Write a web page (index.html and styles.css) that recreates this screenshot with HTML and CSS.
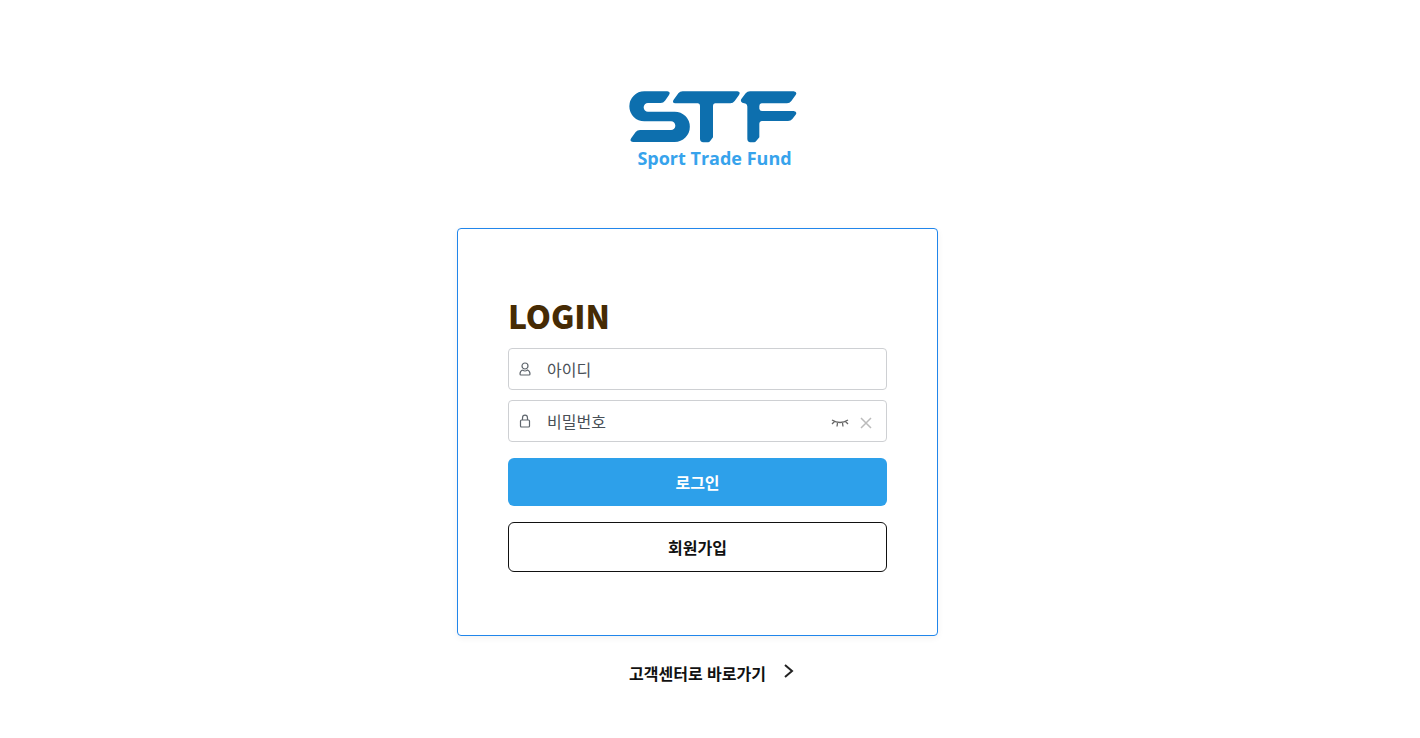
FILE: index.html
```html
<!DOCTYPE html>
<html lang="ko">
<head>
    <meta charset="UTF-8">
    <meta name="viewport" content="width=device-width, initial-scale=1.0">
    <title>STF - Sport Trade Fund</title>
    <link rel="stylesheet" href="styles.css">
</head>
<body>
    <header class="logo">
        <a href="#home">
            <svg class="logo-mark" viewBox="27 33 504 156" role="img" aria-label="STF">
                <path d="M73 34H142Q153 36 147 45L135 62Q130 69 122 69H84A13 13 0 0 0 84 95H164A45.500 45.500 0 0 1 164 186H39Q27 184 34 174L47 156Q52 150 60 150H153A13 13 0 0 0 153 124H73A45 45 0 0 1 73 34Z"/>
                <path d="M188 34H352Q363 36 357 45L344 63Q339 70 331 70H285Q279 71 279 77V172L270 184Q268 187 264 187H250Q240 186 240 176V77Q240 71 234 70H166Q155 68 161 59L175 40Q180 34 188 34Z"/>
                <path d="M390 34H521Q533 36 527 45L514 63Q509 70 501 70H425Q418 71 418 78V86Q419 93 426 93H521Q533 95 527 104L517 117Q512 123 504 123H426Q418 124 418 132V172L408 184Q406 187 402 187H391Q382 186 382 176V80Q382 74 378 71L367 68Q360 64 364 57L377 40Q382 34 390 34Z"/>
            </svg>
            <span class="logo-text">Sport Trade Fund</span>
        </a>
    </header>

    <main class="login-box">
        <h1>LOGIN</h1>
        <form>
            <div class="field">
                <label for="userId" aria-label="아이디">
                    <svg class="icon" viewBox="0 0 14 14">
                        <circle cx="7" cy="4" r="3"/>
                        <path d="M4.500 8Q2 9 2 12Q2 13 3 13H11Q12 13 12 12Q12 9 9.500 8Q7 10 4.500 8"/>
                    </svg>
                </label>
                <input type="text" id="userId" placeholder="아이디">
            </div>
            <div class="field">
                <label for="password" aria-label="비밀번호">
                    <svg class="icon" viewBox="0 0 14 14">
                        <rect x="2.500" y="6" width="9" height="7" rx="1"/>
                        <path d="M4.500 6V4A2.500 2.800 0 0 1 9.500 4V6"/>
                    </svg>
                </label>
                <input type="password" id="password" placeholder="비밀번호">
                <button type="button" class="icon-button show" aria-label="비밀번호 표시">
                    <svg viewBox="0 0 18 10">
                        <path d="M1 2Q9 7 17 2M3.500 3.500L1 6M6.500 5L6 8.500M11.500 5L12 8.500M14.500 3.500L17 6"/>
                    </svg>
                </button>
                <button type="button" class="icon-button clear" aria-label="지우기">
                    <svg viewBox="0 0 12 12">
                        <path d="M1 1L11 11M11 1L1 11"/>
                    </svg>
                </button>
            </div>
            <button type="submit" class="btn btn-login">로그인</button>
            <button type="button" class="btn btn-join">회원가입</button>
        </form>
    </main>

    <footer>
        <a href="#support">
            고객센터로 바로가기
            <svg class="arrow" viewBox="0 0 10 16">
                <path d="M1 2L8 8L1 14"/>
            </svg>
        </a>
    </footer>
</body>
</html>
```
FILE: styles.css
```css
* {
    box-sizing: border-box;
}

body {
    font-family: 'Noto Sans CJK KR', sans-serif;
    font-size: 16px;
    background-color: #fff;
    color: #111;
    margin: 0;
    padding: 91px 25px 40px 0;
    display: flex;
    flex-direction: column;
    align-items: center;
}

a {
    color: inherit;
    text-decoration: none;
}

.logo {
    padding-left: 30px;
    text-align: center;
}

.logo-mark {
    display: block;
    width: 168px;
    height: 52px;
    fill: #0d6fae;
}

.logo-text {
    display: block;
    height: 30px;
    line-height: 30px;
    padding-left: 4px;
    font-family: 'Open Sans', sans-serif;
    font-size: 18px;
    font-weight: bold;
    color: #37a3ec;
    white-space: nowrap;
}

.login-box {
    width: 100%;
    max-width: 481px;
    margin-top: 55px;
    padding: 63px 50px;
    border: 1px solid #2186eb;
    border-radius: 4px;
    box-shadow: 0 2px 6px rgba(70, 40, 0, 0.06);
}

h1 {
    margin: 0 0 10px;
    font-size: 32px;
    font-weight: 900;
    line-height: 46px;
    color: #462b04;
}

.field {
    display: flex;
    align-items: center;
    height: 42px;
    margin-bottom: 10px;
    padding: 0 14px 0 9px;
    border: 1px solid #ced0d3;
    border-radius: 4px;
}

.icon {
    display: block;
    width: 14px;
    height: 14px;
    fill: none;
    stroke: #5f666d;
    stroke-width: 1.2;
}

.field input {
    flex: 1;
    min-width: 0;
    padding: 0 0 0 15px;
    border: none;
    outline: none;
    background: none;
    font: inherit;
    color: #495057;
}

.field input::placeholder {
    color: #495057;
    opacity: 1;
}

.icon-button {
    padding: 3px 0 0;
    border: none;
    background: none;
    cursor: pointer;
}

.icon-button svg {
    display: block;
    fill: none;
}

.show svg {
    width: 18px;
    height: 10px;
    stroke: #666;
    stroke-width: 1.3;
}

.clear {
    margin-left: 11px;
}

.clear svg {
    width: 12px;
    height: 12px;
    stroke: #bbb;
    stroke-width: 1.5;
}

.btn {
    display: block;
    width: 100%;
    margin-top: 16px;
    padding: 0;
    border-radius: 6px;
    font: inherit;
    font-weight: bold;
    cursor: pointer;
}

.btn-login {
    height: 48px;
    border: none;
    background-color: #2da0ea;
    color: #fff;
}

.btn-join {
    height: 50px;
    border: 1px solid #111;
    background-color: #fff;
    color: #111;
}

footer {
    margin-top: 25px;
    padding-left: 28px;
    font-weight: bold;
}

footer a {
    display: flex;
    align-items: center;
    gap: 18px;
}

.arrow {
    width: 10px;
    height: 16px;
    margin-bottom: 4px;
    fill: none;
    stroke: #222;
    stroke-width: 2;
}
```
